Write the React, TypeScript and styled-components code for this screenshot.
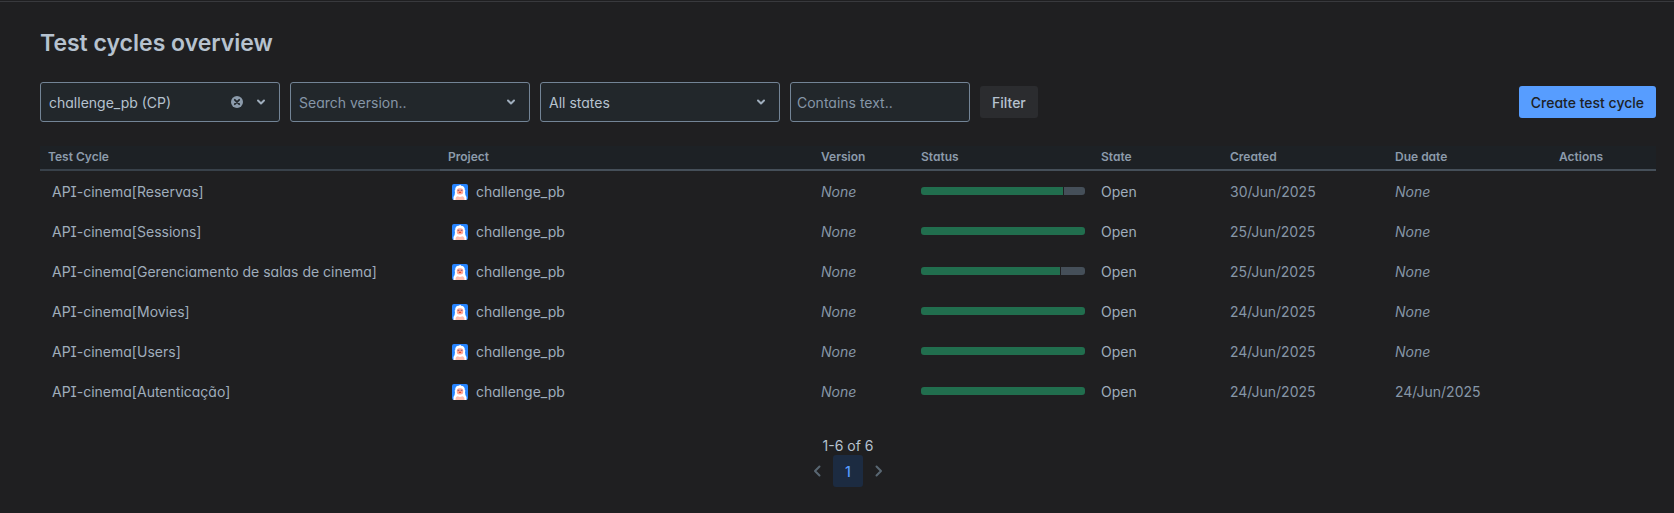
import React from "react";
import styled, { createGlobalStyle, css } from "styled-components";

const GlobalStyle = createGlobalStyle`
  * { box-sizing: border-box; }
  body {
    margin: 0;
    background: #1f1f21;
    color: #9fadbc;
    font: 400 14px/20px Inter, "Liberation Sans", sans-serif;
    font-feature-settings: "cv08", "cv11";
  }
  button, input, select { font: inherit; font-feature-settings: inherit; }
`;

const Page = styled.main`
  border-top: 1px solid #38393d;
  margin-top: 1px;
  padding: 24px 18px 24px 40px;
`;

const Title = styled.h1`
  margin: 0 0 22px;
  font-size: 23px;
  line-height: 34px;
  font-weight: 600;
  color: #b6c2cf;
`;

const Toolbar = styled.form`
  display: flex;
  align-items: center;
  gap: 10px;
`;

const field = css`
  height: 40px;
  border: 1px solid #738496;
  border-radius: 3px;
  background: #22272b;
  color: #b6c2cf;
`;

const SelectField = styled.div`
  ${field}
  display: flex;
  align-items: center;
  flex: 0 1 240px;
  min-width: 0;
  padding-right: 12px;
  gap: 12px;
  svg { flex: none; pointer-events: none; }
`;

const Select = styled.select<{ $muted?: boolean }>`
  appearance: none;
  flex: 1;
  min-width: 0;
  height: 100%;
  padding: 2px 8px 0;
  border: 0;
  outline: 0;
  background: transparent;
  color: ${(p) => (p.$muted ? "#8696a7" : "#b6c2cf")};
`;

const ClearButton = styled.button`
  display: flex;
  padding: 0;
  border: 0;
  background: none;
`;

const TextField = styled.input`
  ${field}
  flex: 0 1 180px;
  min-width: 0;
  padding: 0 6px;
  &::placeholder { color: #8696a7; opacity: 1; }
`;

const Button = styled.button<{ $primary?: boolean }>`
  height: 32px;
  padding: 2px 12px 0;
  border: 0;
  border-radius: 3px;
  font-weight: 500;
  white-space: nowrap;
  background: ${(p) => (p.$primary ? "#579dff" : "#2b2c2f")};
  color: ${(p) => (p.$primary ? "#1d2125" : "#b6c2cf")};
  margin-left: ${(p) => (p.$primary ? "auto" : "0")};
`;

const Table = styled.table`
  width: 100%;
  margin-top: 24px;
  table-layout: fixed;
  border-collapse: separate;
  border-spacing: 0;
`;

const Col = styled.col<{ $w?: number }>`
  width: ${(p) => (p.$w ? `${p.$w}px` : "auto")};
`;

const HeadCell = styled.th`
  height: 25px;
  padding: 0 8px 2px;
  border-bottom: 2px solid #454f59;
  background: #1d2125;
  color: #8c9bab;
  font-size: 12px;
  line-height: 16px;
  font-weight: 600;
  text-align: left;
  &:first-child { border-bottom-color: #38414a; }
`;

const Cell = styled.td`
  height: 40px;
  padding: 2px 8px 0;
  color: #9fadbc;
  &:first-child { padding-left: 12px; }
`;

const DateCell = styled(Cell)`
  color: #8696a7;
`;

const BarCell = styled(Cell)`
  padding-top: 0;
`;

const Unset = styled.em`
  color: #8696a7;
`;

const CycleLink = styled.a`
  color: inherit;
  text-decoration: none;
  white-space: nowrap;
`;

const Project = styled.div`
  display: flex;
  align-items: center;
  gap: 8px;
  padding-left: 4px;
`;

const Bar = styled.div`
  display: flex;
  gap: 1px;
  height: 8px;
  border-radius: 3px;
  overflow: hidden;
`;

const Passed = styled.span`
  background: #216e4e;
`;

const Remaining = styled.span`
  flex: 1;
  background: #454f59;
`;

const Footer = styled.footer`
  display: flex;
  flex-direction: column;
  align-items: center;
  margin-top: 26px;
  line-height: 18px;
  color: #b6c2cf;
`;

const Pager = styled.nav`
  display: flex;
  align-items: center;
  gap: 4px;
`;

const PageButton = styled.button<{ $current?: boolean }>`
  display: flex;
  align-items: center;
  justify-content: center;
  width: ${(p) => (p.$current ? "30px" : "22px")};
  height: 32px;
  padding: ${(p) => (p.$current ? "2px 0 0" : "0")};
  border: 0;
  border-radius: 3px;
  font-weight: 500;
  background: ${(p) => (p.$current ? "#1c2b41" : "transparent")};
  color: ${(p) => (p.$current ? "#579dff" : "#596773")};
`;

const ChevronDown = () => (
  <svg width="12" height="12" viewBox="0 0 12 12" fill="none" stroke="#9fadbc" strokeWidth="2" strokeLinecap="round" strokeLinejoin="round">
    <path d="M3 4.500 6 7.500 9 4.500" />
  </svg>
);

const ClearIcon = () => (
  <svg width="12" height="12" viewBox="0 0 12 12">
    <circle cx="6" cy="6" r="6" fill="#8c9bab" />
    <path d="M3.800 3.800l4.400 4.400M8.200 3.800l-4.400 4.400" stroke="#22272b" strokeWidth="1.800" strokeLinecap="round" />
  </svg>
);

const Arrow = ({ d }: { d: string }) => (
  <svg width="12" height="12" viewBox="0 0 12 12" fill="none" stroke="currentColor" strokeWidth="2" strokeLinecap="round" strokeLinejoin="round">
    <path d={d} />
  </svg>
);

const Avatar = () => (
  <svg width="16" height="16" viewBox="0 0 16 16" aria-hidden="true">
    <rect width="16" height="16" rx="2" fill="#2684ff" />
    <path d="M1.500 16V13Q3 11 3 8Q2 6.500 3.200 6Q3 2 6.500 1.800L8.500.8L9 1.800Q13 2 12.800 6Q14 6.500 13 8Q13 11 14.500 13V16Z" fill="#fff" />
    <rect x="4.800" y="4.200" width="6.400" height="6.300" rx="2.500" fill="#ffa896" />
    <path d="M3.500 16Q3.300 12.800 5.500 12.300L8 13L10.500 12.300Q12.700 12.800 12.500 16Z" fill="#ffbdad" />
    <path d="M5.600 6.300h1.700M8.700 6.300h1.700" stroke="#7a5b86" strokeWidth="1" />
    <path d="M6.900 8.300h2.200" stroke="#de350b" strokeWidth="1" />
  </svg>
);

type Cycle = { name: string; passed: number; created: string; due?: string };

const cycles: Cycle[] = [
  { name: "Reservas", passed: 86.6, created: "30/Jun/2025" },
  { name: "Sessions", passed: 100, created: "25/Jun/2025" },
  { name: "Gerenciamento de salas de cinema", passed: 85, created: "25/Jun/2025" },
  { name: "Movies", passed: 100, created: "24/Jun/2025" },
  { name: "Users", passed: 100, created: "24/Jun/2025" },
  { name: "Autenticação", passed: 100, created: "24/Jun/2025", due: "24/Jun/2025" },
];

const columns: [string, number?][] = [
  ["Test Cycle", 400], ["Project"], ["Version", 100], ["Status", 180],
  ["State", 129], ["Created", 165], ["Due date", 164], ["Actions", 105],
];

export default function App() {
  return (
    <>
      <GlobalStyle />
      <Page>
        <Title>Test cycles overview</Title>
        <Toolbar onSubmit={(e) => e.preventDefault()}>
          <SelectField>
            <Select aria-label="Project"><option>challenge_pb (CP)</option></Select>
            <ClearButton type="button" aria-label="Clear project"><ClearIcon /></ClearButton>
            <ChevronDown />
          </SelectField>
          <SelectField>
            <Select aria-label="Version" $muted><option>Search version..</option></Select>
            <ChevronDown />
          </SelectField>
          <SelectField>
            <Select aria-label="State"><option>All states</option></Select>
            <ChevronDown />
          </SelectField>
          <TextField aria-label="Contains text" placeholder="Contains text.." />
          <Button type="submit">Filter</Button>
          <Button type="button" $primary>Create test cycle</Button>
        </Toolbar>
        <Table>
          <colgroup>{columns.map(([name, w]) => <Col key={name} $w={w} />)}</colgroup>
          <thead>
            <tr>{columns.map(([name]) => <HeadCell key={name} scope="col">{name}</HeadCell>)}</tr>
          </thead>
          <tbody>
            {cycles.map((c) => (
              <tr key={c.name}>
                <Cell><CycleLink href="#">API-cinema[{c.name}]</CycleLink></Cell>
                <Cell><Project><Avatar />challenge_pb</Project></Cell>
                <Cell><Unset>None</Unset></Cell>
                <BarCell>
                  <Bar role="img" aria-label={`${c.passed}% passed`}>
                    <Passed style={{ width: `${c.passed}%` }} />
                    {c.passed < 100 && <Remaining />}
                  </Bar>
                </BarCell>
                <Cell>Open</Cell>
                <DateCell>{c.created}</DateCell>
                <DateCell>{c.due ?? <Unset>None</Unset>}</DateCell>
                <Cell />
              </tr>
            ))}
          </tbody>
        </Table>
        <Footer>
          <span>1-6 of 6</span>
          <Pager aria-label="Pagination">
            <PageButton aria-label="Previous page"><Arrow d="M7.500 1.500 3 6l4.500 4.500" /></PageButton>
            <PageButton $current aria-current="page">1</PageButton>
            <PageButton aria-label="Next page"><Arrow d="M4.500 1.500 9 6l-4.500 4.500" /></PageButton>
          </Pager>
        </Footer>
      </Page>
    </>
  );
}
